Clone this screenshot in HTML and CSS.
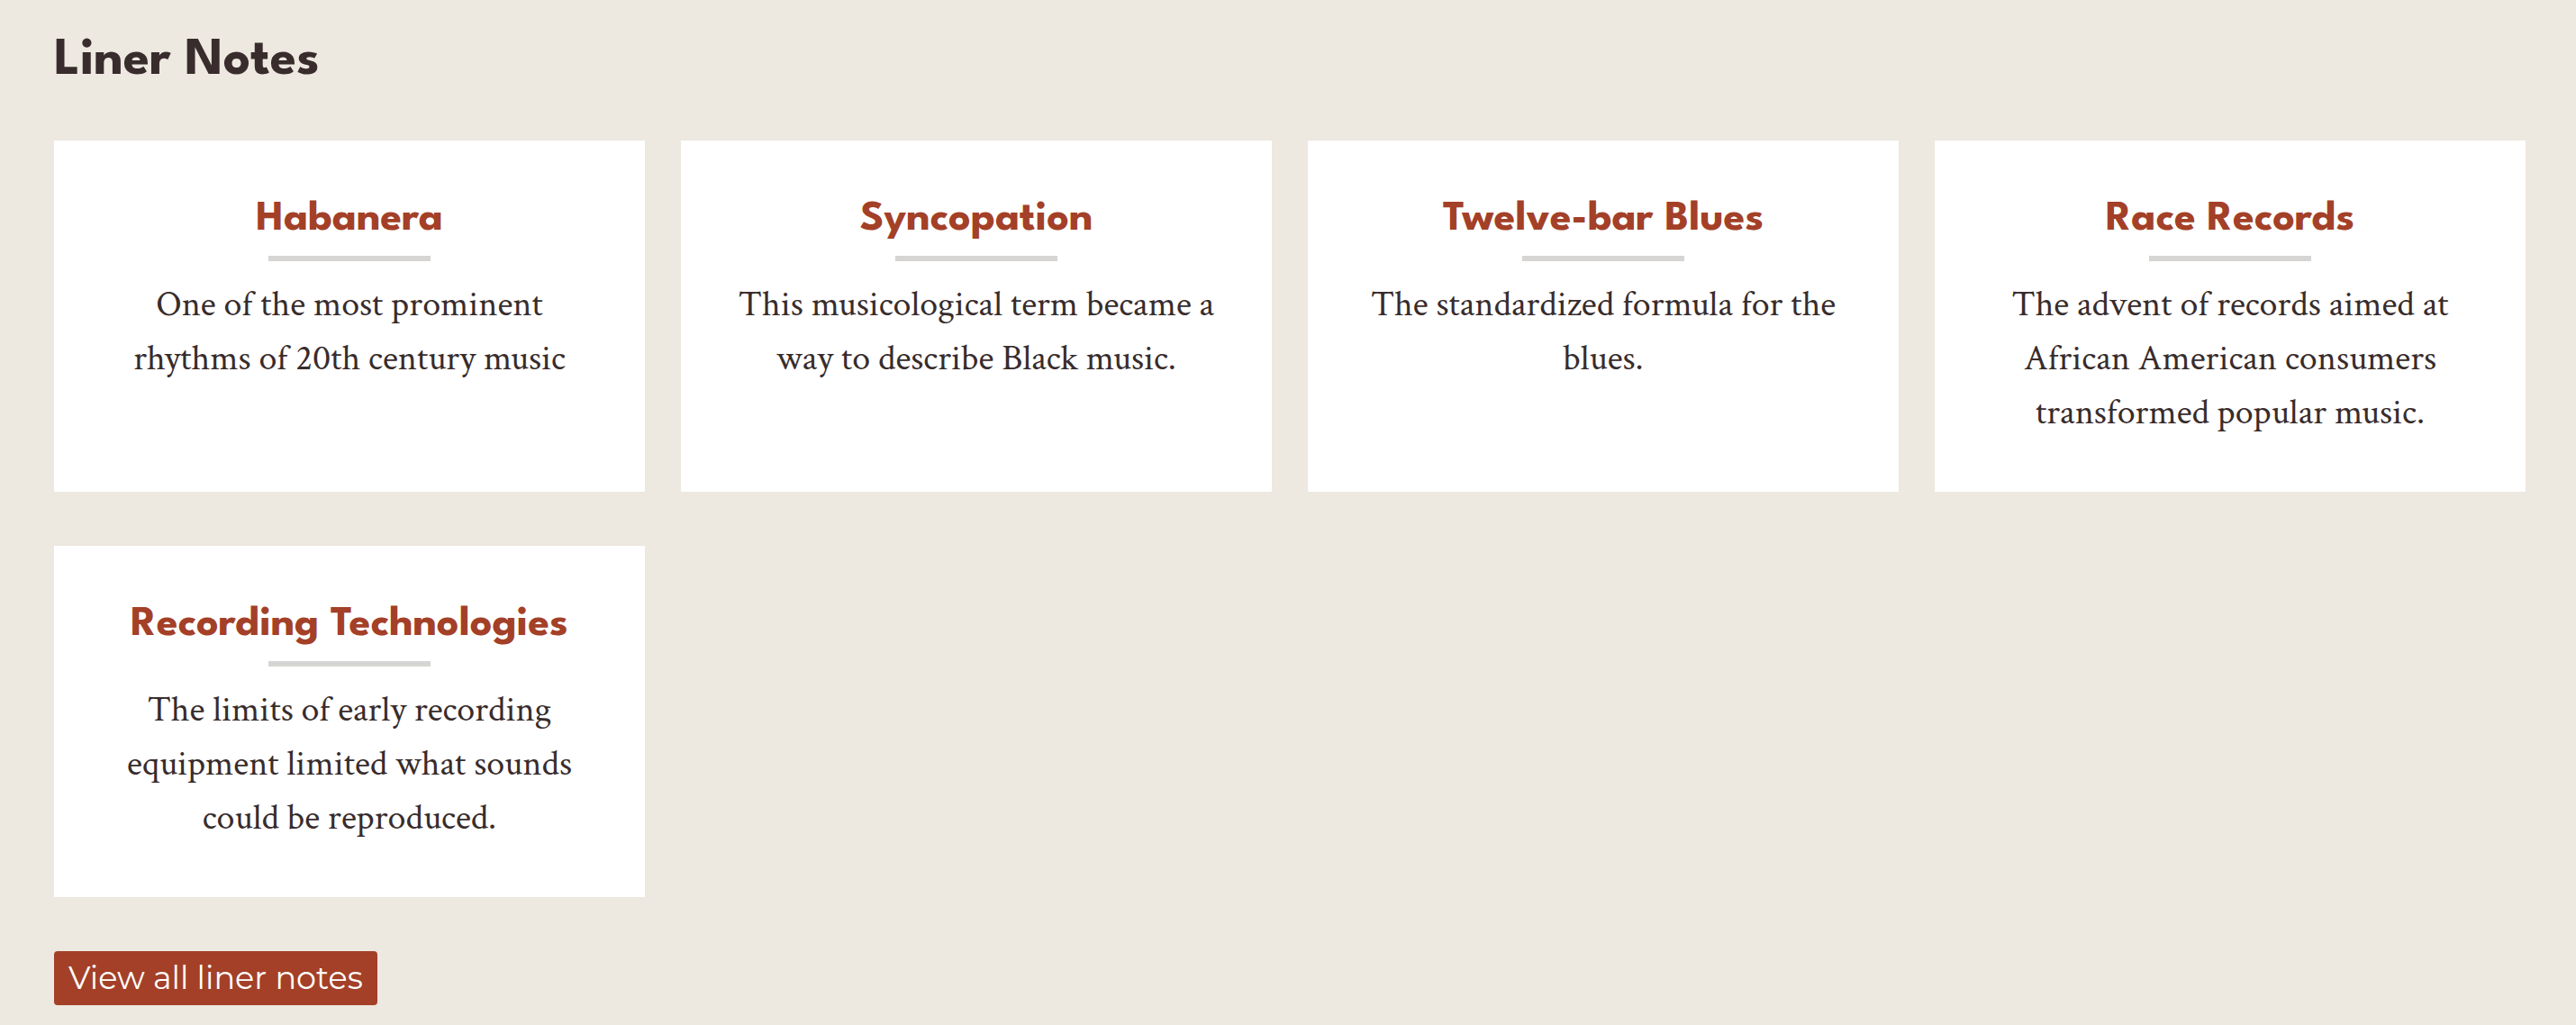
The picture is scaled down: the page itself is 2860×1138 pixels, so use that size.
FILE: index.html
```html
<!DOCTYPE html>
<html lang="en">
<head>
<meta charset="utf-8">
<meta name="viewport" content="width=device-width, initial-scale=1">
<title>Liner Notes</title>
<link rel="stylesheet" href="styles.css">
</head>
<body>
<section class="notes" aria-labelledby="notes-title">
  <h2 class="notes-title" id="notes-title">Liner Notes</h2>
  <div class="note-grid">
    <article class="note">
      <h3 class="note-title"><a class="note-link" href="#habanera">Habanera</a></h3>
      <hr class="note-rule">
      <p class="note-text">One of the most prominent rhythms of 20th century music</p>
    </article>
    <article class="note">
      <h3 class="note-title"><a class="note-link" href="#syncopation">Syncopation</a></h3>
      <hr class="note-rule">
      <p class="note-text">This musicological term became a way to describe Black music.</p>
    </article>
    <article class="note">
      <h3 class="note-title"><a class="note-link" href="#twelve-bar-blues">Twelve-bar Blues</a></h3>
      <hr class="note-rule">
      <p class="note-text">The standardized formula for the blues.</p>
    </article>
    <article class="note">
      <h3 class="note-title"><a class="note-link" href="#race-records">Race Records</a></h3>
      <hr class="note-rule">
      <p class="note-text">The advent of records aimed at African American consumers transformed popular music.</p>
    </article>
    <article class="note">
      <h3 class="note-title"><a class="note-link" href="#recording-technologies">Recording Technologies</a></h3>
      <hr class="note-rule">
      <p class="note-text">The limits of early recording equipment limited what sounds could be reproduced.</p>
    </article>
  </div>
  <a class="view-all" href="#all">View all liner notes</a>
</section>
</body>
</html>
```
FILE: styles.css
```css
* {
  box-sizing: border-box;
}

body {
  margin: 0;
  background: #ede8e0;
  color: #382c2c;
}

.notes {
  padding: 36px 56px 22px 60px;
}

.notes-title {
  margin: 0 0 56px;
  font: 700 59px/64px "League Spartan", Lato, sans-serif;
}

.note-grid {
  display: grid;
  grid-template-columns: repeat(4, 1fr);
  gap: 60px 40px;
  margin-bottom: 60px;
}

.note {
  padding: 60px 60px 58px;
  background: #fff;
  text-align: center;
}

.note-title {
  margin: 0;
  font: 700 48px/56px "League Spartan", Lato, sans-serif;
  white-space: nowrap;
}

.note-link {
  color: #a34027;
  text-decoration: none;
}

.note-rule {
  width: 180px;
  height: 6px;
  margin: 12px auto 18px;
  border: 0;
  background: #d6d5d3;
}

.note-text {
  margin: 0;
  font: 40px/60px "Crimson Text", "Liberation Serif", serif;
}

.view-all {
  display: inline-block;
  padding: 0 16px;
  border-radius: 4px;
  background: #a34027;
  color: #fff;
  font: 35px/60px Montserrat, Inter, sans-serif;
  text-decoration: none;
  vertical-align: top;
}
```
